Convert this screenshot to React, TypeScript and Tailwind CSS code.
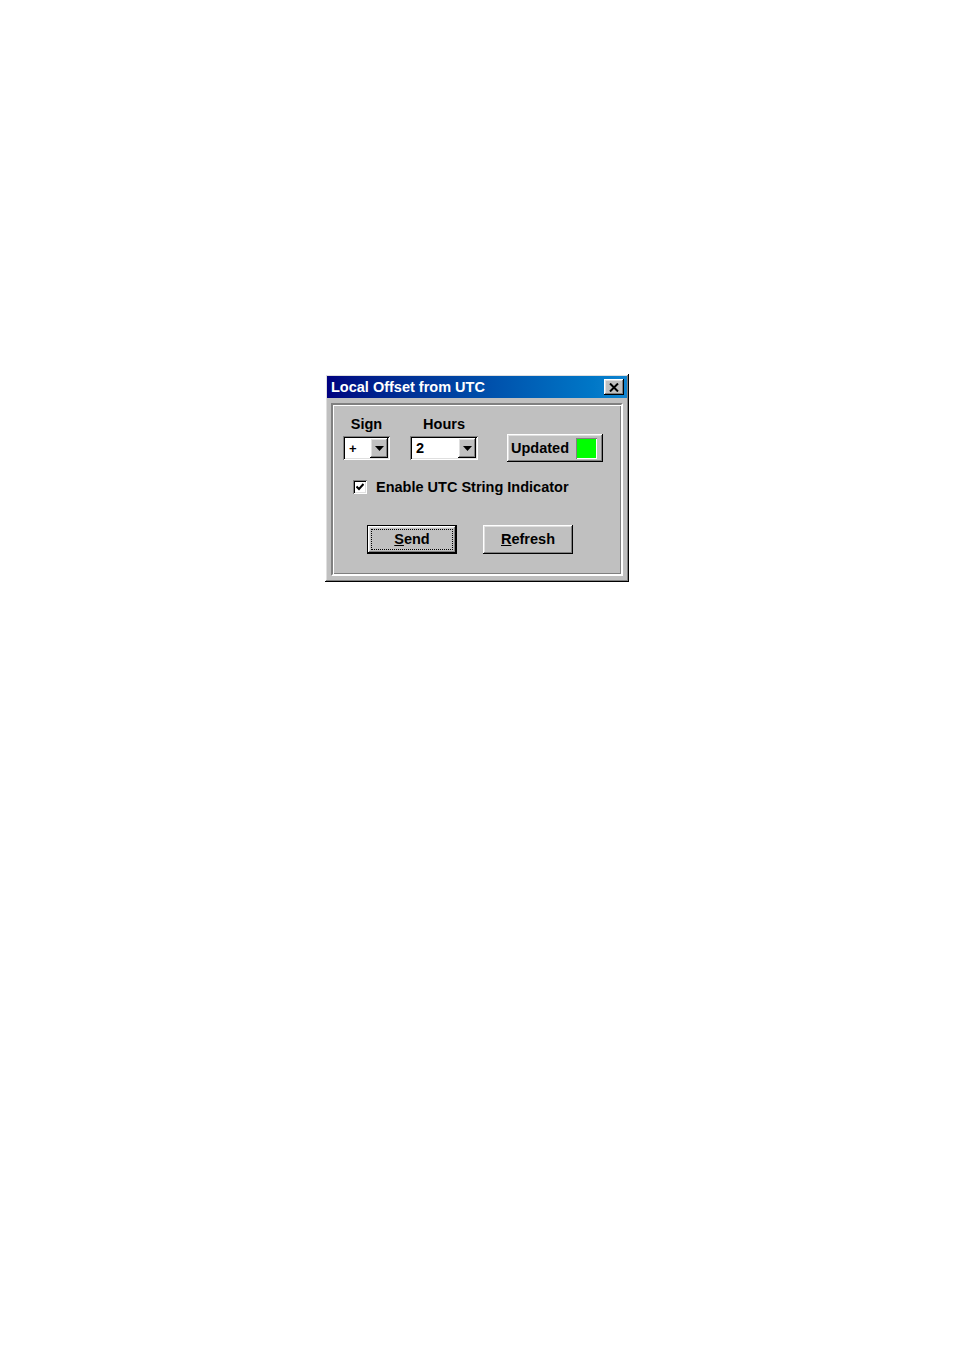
import React from 'react';

const raised =
  'shadow-[inset_-1px_-1px_#000,inset_1px_1px_#fff,inset_-2px_-2px_#808080,inset_2px_2px_#dfdfdf]';
const sunken =
  'shadow-[inset_1px_1px_#808080,inset_-1px_-1px_#fff,inset_2px_2px_#000,inset_-2px_-2px_#dfdfdf]';

const Arrow: React.FC = () => (
  <svg width="9" height="5" viewBox="0 0 9 5">
    <path d="M0 0h9L4.5 5z" fill="#000" />
  </svg>
);

const Combo: React.FC<{ value: string; width: string; small?: boolean }> = ({ value, width, small }) => (
  <div className={`${width} h-[24px] bg-white ${sunken} flex items-center p-[2px]`}>
    <span className={`flex-1 pl-[4px] font-bold ${small ? 'text-[13px]' : 'text-[14.5px]'} leading-none`}>{value}</span>
    <div className={`w-[18px] h-[20px] bg-[#c0c0c0] ${raised} flex items-center justify-center`}>
      <Arrow />
    </div>
  </div>
);

const App: React.FC = () => {
  return (
    <div className="w-[954px] h-[1350px] bg-white pt-[374px] pl-[325px]" style={{ fontFamily: '"Liberation Sans", Arial, sans-serif' }}>
      {/* Window */}
      <div className={`w-[304px] h-[208px] bg-[#c0c0c0] p-[2px] ${raised} flex flex-col`}>
        {/* Title bar */}
        <div className="h-[22px] bg-gradient-to-r from-[#000080] to-[#1084d0] flex items-center justify-between pl-[4px] pr-[3px]">
          <span className="text-white font-bold text-[14.5px] leading-none">Local Offset from UTC</span>
          <div className={`w-[20px] h-[16px] bg-[#c0c0c0] ${raised} flex items-center justify-center`}>
            <svg width="10" height="9" viewBox="0 0 10 9">
              <path d="M1 0.5L9 8.5M9 0.5L1 8.5" stroke="#000" strokeWidth="2" />
            </svg>
          </div>
        </div>

        {/* Body */}
        <div className="flex-1 px-[4px] pt-[5px] pb-[4px]">
          <div className="h-full border-2 border-t-[#808080] border-l-[#808080] border-r-white border-b-white shadow-[inset_1px_1px_#fff,inset_-1px_-1px_#808080] pt-[11px] pl-[10px] text-black">
            <div className="flex items-start">
              <div className="w-[47px] flex flex-col items-center">
                <span className="font-bold text-[14.5px] leading-[16px]">Sign</span>
                <div className="mt-[4px]">
                  <Combo value="+" width="w-[47px]" small />
                </div>
              </div>
              <div className="ml-[20px] w-[68px] flex flex-col items-center">
                <span className="font-bold text-[14.5px] leading-[16px]">Hours</span>
                <div className="mt-[4px]">
                  <Combo value="2" width="w-[68px]" />
                </div>
              </div>
              <div className={`ml-[29px] mt-[18px] w-[96px] h-[28px] ${raised} flex items-center pl-[4px]`}>
                <span className="font-bold text-[14.5px] leading-none">Updated</span>
                <div className="ml-auto mr-[6px] w-[21px] h-[21px] bg-[#00ff00] shadow-[inset_1px_1px_#808080,inset_-1px_-1px_#fff]" />
              </div>
            </div>

            <div className="flex items-center mt-[17px] ml-[10px] h-[16px]">
              <div className={`w-[14px] h-[14px] bg-white ${sunken} flex items-center justify-center`}>
                <svg width="8" height="8" viewBox="0 0 8 8">
                  <path d="M0.5 3.5L3 6L7.5 1" stroke="#000" strokeWidth="2" fill="none" />
                </svg>
              </div>
              <span className="ml-[9px] font-bold text-[14.5px] leading-none">Enable UTC String Indicator</span>
            </div>

            <div className="flex mt-[30px] ml-[24px]">
              <div className="w-[90px] h-[29px] bg-[#c0c0c0] border border-black p-0">
                <div className={`w-full h-full ${raised} p-[3px]`}>
                  <div className="w-full h-full border border-dotted border-black flex items-center justify-center">
                    <span className="font-bold text-[14.5px] leading-none">
                      <span className="underline">S</span>end
                    </span>
                  </div>
                </div>
              </div>
              <div className={`ml-[26px] w-[90px] h-[29px] ${raised} flex items-center justify-center`}>
                <span className="font-bold text-[14.5px] leading-none">
                  <span className="underline">R</span>efresh
                </span>
              </div>
            </div>
          </div>
        </div>
      </div>
    </div>
  );
};

export default App;
